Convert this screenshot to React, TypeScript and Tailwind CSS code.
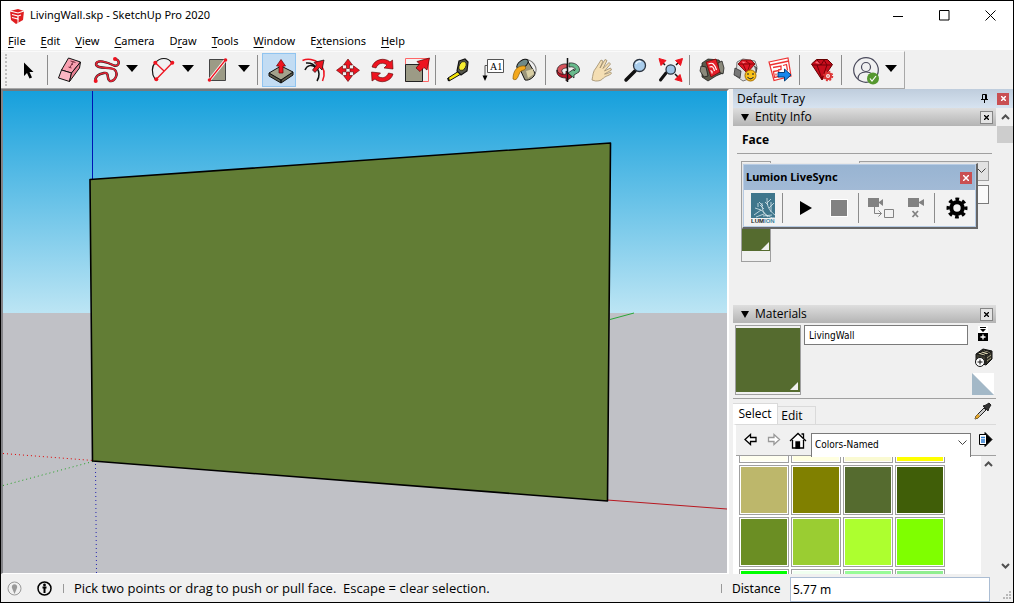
import type { ReactNode } from "react"

const RED = "#ee1420"

const Icon = ({ children }: { children: ReactNode }) => (
  <svg width="34" height="34" viewBox="0 0 34 34" fill="none" stroke="#111" strokeWidth="1">
    {children}
  </svg>
)

const Tool = ({ label, active, children }: { label: string; active?: boolean; children: ReactNode }) => (
  <button
    aria-label={label}
    className={active ? "h-[34px] w-[34px] shrink-0 bg-[#c2dcf3] outline-1 -outline-offset-1 outline-[#90c4f0]" : "h-[34px] w-[34px] shrink-0"}
  >
    <Icon>{children}</Icon>
  </button>
)

const Caret = ({ label }: { label: string }) => (
  <button aria-label={label} className="flex h-[34px] w-[18px] shrink-0 items-center justify-center pr-[2px] pb-1">
    <svg width="12" height="7" viewBox="0 0 12 7"><path d="M0 0h12L6 7z" /></svg>
  </button>
)

const Sep = () => <div className="mr-1 ml-[3px] h-[30px] w-px shrink-0 bg-[#8c8c8c]" />

const Chevron = ({ up }: { up?: boolean }) => (
  <svg width="9" height="6" viewBox="0 0 9 6" fill="none" stroke="#505050" strokeWidth="2">
    <path d={up ? "M1 5l3.500-3.500L8 5" : "M1 1l3.500 3.500L8 1"} />
  </svg>
)

const menus = ["File", "Edit", "View", "Camera", "Draw", "Tools", "Window", "Extensions", "Help"]
const underlined: Record<string, number> = { Draw: 1, Extensions: 1 }

const TitleBar = () => (
  <header className="flex h-[29px] items-center bg-white pl-2">
    <svg width="17" height="16" viewBox="0 0 17 16" fill="none">
      <path d="M1 3l8-2 6 2-1 9-7 4-5-4z" fill="#e01e20" />
      <path d="M1 3l8 2 6-2M3 6.500l6 1.500v3l-6-1.500M9 8l3-1" stroke="#fff" strokeWidth="1.200" />
      <path d="M9 11v4" stroke="#fff" />
    </svg>
    <h1 className="ml-1 flex-1 font-['Noto_Sans',sans-serif] text-[11px]">LivingWall.skp - SketchUp Pro 2020</h1>
    <button aria-label="Minimize" className="flex h-7 w-[46px] items-center justify-center">
      <svg width="10" height="10" stroke="#000"><path d="M0 5.500h10" /></svg>
    </button>
    <button aria-label="Maximize" className="flex h-7 w-[46px] items-center justify-center">
      <svg width="11" height="11" fill="none" stroke="#000"><path d="M.5.5h9.500v9.500H.5z" /></svg>
    </button>
    <button aria-label="Close" className="flex h-7 w-[46px] items-center justify-center">
      <svg width="11" height="11" stroke="#000"><path d="M.5.5l10 10M10.500.5l-10 10" /></svg>
    </button>
  </header>
)

const MenuBar = () => (
  <nav className="flex h-5 items-center gap-px bg-white pt-[2px]">
    {menus.map((menu) => {
      const at = underlined[menu] || 0
      return (
        <button key={menu} className="px-[7px] font-['Noto_Sans',sans-serif] text-[11px] leading-4">
          {menu.slice(0, at)}
          <span className="underline underline-offset-2">{menu[at]}</span>
          {menu.slice(at + 1)}
        </button>
      )
    })}
  </nav>
)

const ToolBar = () => (
  <div className="flex h-[39px] bg-[#f0f0f0] pt-px">
    <div className="flex items-center border-t border-r border-b border-t-[#fafafa] border-r-[#a8a8a8] border-b-[#a8a8a8] bg-[#f1f1f1] pr-[3px] pl-1">
      <div className="mr-[2px] h-8 w-[3px] border-l-2 border-dotted border-[#bdbdbd]" />
      <Tool label="Select">
        <path d="M14 9.500V23l3-3 2.500 5.500 2.500-1-2.500-5.500h4z" fill="#000" stroke="none" />
      </Tool>
      <Sep />
      <Tool label="Eraser">
        <path d="M16.500 5l12 4-9 11-10-3z" fill="#f8a0b0" />
        <path d="M9.500 17l10 3-2 8.500-11-3.500z" fill="#fbb6c2" />
        <path d="M19.500 20l9-11-1 6-10 13.500z" fill="#e87f92" />
        <path d="M18.500 8l5 1.500M16.500 14l3 1M21.500 8.500l-4 6.500M19 11l2 .5" stroke="#7a3040" />
      </Tool>
      <div className="flex pl-1">
        <Tool label="Freehand">
          <path d="M25 5.700C31 8 29 14 24 12.500 17 9 7 6 6 11c0 6 16 2 19 6 4 5-1 12-5 11-4-2 0-9-6-8-6 1-9 3-8.500 8" stroke="#1a1a1a" strokeWidth="2.400" />
          <path d="M25 5.700C31 8 29 14 24 12.500 17 9 7 6 6 11c0 6 16 2 19 6 4 5-1 12-5 11-4-2 0-9-6-8-6 1-9 3-8.500 8" stroke="#e22334" strokeWidth="1.600" />
          <circle cx="25" cy="6" r="2" fill={RED} stroke="none" />
          <circle cx="5.700" cy="28" r="2" fill={RED} stroke="none" />
        </Tool>
        <Caret label="Freehand options" />
      </div>
      <div className="flex pl-1">
        <Tool label="Arc">
          <path d="M9 26C5 20 6 13 9 10c5-6 13-6 17 0" strokeWidth="1.200" />
          <path d="M9.300 9.700l9 8.500M26.300 9.700l-16 16.600" stroke={RED} strokeWidth="1.300" />
          <g fill={RED} stroke="none">
            <circle cx="9.300" cy="9.700" r="2" /><circle cx="26.300" cy="9.700" r="2" /><circle cx="10.300" cy="26.300" r="2" />
          </g>
        </Tool>
        <Caret label="Arc options" />
      </div>
      <div className="flex pl-1">
        <Tool label="Rectangle">
          <path d="M7.500 6.500h16v21h-16z" fill="#9c9b86" stroke="#444" />
          <path d="M7.500 27l16-20" stroke="#fff" strokeWidth="3" />
          <path d="M7.500 27l16-20" stroke={RED} strokeWidth="1.300" />
          <g fill={RED} stroke="none"><circle cx="7.500" cy="27" r="1.800" /><circle cx="23.500" cy="7" r="1.800" /></g>
        </Tool>
        <Caret label="Rectangle options" />
      </div>
      <Sep />
      <Tool label="Push/Pull" active>
        <path d="M7 20l12 7v3L7 23zM31 19l-12 8v3l12-8z" fill="#5f5e4e" />
        <path d="M7 20l12-7 12 6-12 8z" fill="#a3a28c" />
        <path d="M17 20v-7h-2.500l4.500-6.500 4.500 6.500H21v7z" fill={RED} stroke="#600" strokeWidth=".7" />
      </Tool>
      <Tool label="Offset">
        <path d="M6.500 7.500C17 3 33 12 26.500 28" stroke={RED} strokeWidth="1.500" />
        <path d="M9 17c2-5 7-6 11-2M10 10c8-1 17 8 11 18" strokeWidth="1.500" />
        <path d="M16.500 17l4-5-2.500-2.500L28 7l-2 10-2.500-2.500-4.500 5z" fill={RED} strokeWidth=".7" />
      </Tool>
      <Tool label="Move">
        <path d="M18 6l4.500 6h-3v3.500h-3V12h-3zM18 28.500l4.500-6h-3V19h-3v3.500h-3zM6.500 17.300l6-4.500v3H16v3h-3.500v3zM29.500 17.300l-6-4.500v3H20v3h3.500v3z" fill={RED} stroke="#500" strokeWidth=".6" />
      </Tool>
      <Tool label="Rotate">
        <path d="M8 14C10 6 21 4 26 9l2.500-2 .5 9-9-1 3-3c-4-3-9-2-11 3zM29 21c-2 8-13 10-18 5l-3 2-.5-9 9 1-3 3c4 3 9 2 11-3z" fill={RED} stroke="#500" strokeWidth=".6" />
      </Tool>
      <Tool label="Scale">
        <path d="M7.500 5.500h23v23h-23z" stroke="#f66" />
        <path d="M7.500 11.500h17v17h-17z" fill="#9c9b86" stroke="#222" />
        <path d="M18 15l3.500-4L19 8.500 31.500 5 29 17l-3-2.500-4 4z" fill={RED} stroke="#500" strokeWidth=".7" />
      </Tool>
      <Sep />
      <Tool label="Tape Measure">
        <path d="M19 18L8 25l1 3 12-7z" fill="#f5e60a" />
        <path d="M19 8l6-2 3 3-1 9-6 4-4-4z" fill="#55564c" strokeWidth="1.200" />
        <ellipse cx="22.500" cy="13" rx="3.200" ry="4.700" transform="rotate(25 22.500 13)" fill="#f7ee30" strokeWidth=".7" />
        <path d="M8 25l1 3" strokeWidth="2" />
      </Tool>
      <Tool label="Text">
        <path d="M13.500 6.500h16v13h-16z" fill="#fff" stroke="#555" />
        <path d="M13 12.500h-2V24" stroke="#555" />
        <path d="M8.500 22.500h5L11 28z" fill="#000" stroke="none" />
        <text x="16" y="16.500" fontSize="10" fontFamily="Liberation Serif, serif" fill="#000" stroke="none">A1</text>
      </Tool>
      <Tool label="Paint Bucket">
        <ellipse cx="22" cy="14" rx="5" ry="8" transform="rotate(-35 22 14)" stroke="#777" />
        <path d="M10 12l9-5 8 13c0 4-6 8-10 7z" fill="#9b957a" />
        <path d="M18 18l7-2 1 5-6 4z" fill="#d9cfa4" stroke="none" />
        <ellipse cx="14.500" cy="11" rx="6.500" ry="3.500" transform="rotate(-35 14.500 11)" fill="#6f8a88" />
        <path d="M17 13c-8-1-12 5-12 13 5 3 5-5 8-8 2-1 6-1 4-5z" fill="#f3a81d" stroke="#8a5a00" strokeWidth=".7" />
      </Tool>
      <Sep />
      <Tool label="Orbit">
        <path d="M17 11C9 10 5 16 8 21l5 2v-3c-3-3 0-5 4-5z" fill="#d4545c" strokeWidth=".7" />
        <path d="M19 10c8-1 12 5 10 9l-5 3v3l-6-5 6-4v2c3-2 0-5-5-4z" fill="#69bb8d" strokeWidth=".7" />
        <path d="M7 17c1 4 6 5 9 4v-3l6 6-6 4v-3c-6 0-10-3-9-8z" fill="#b81729" strokeWidth=".7" />
        <path d="M17.500 5v24" strokeWidth="1.500" />
      </Tool>
      <Tool label="Pan">
        <path d="M8 27c1-5 1-9 4-12l5-8 2 1-3 7 5-8.500 2 1-4 8 6-6 1.500 1.500-6 7 6-3 1 2-7 4c4 0 6-3 7-1 0 2-7 3-9 6-2 2-5 2-7 2z" fill="#f4deb3" stroke="#9c8a6a" strokeWidth=".8" />
      </Tool>
      <Tool label="Zoom">
        <path d="M17 18l-9 9" strokeWidth="3.500" strokeLinecap="round" />
        <circle cx="21.500" cy="12.500" r="6" fill="#a9cdec" stroke="#2b3440" strokeWidth="1.300" />
        <path d="M18 11c1-3 4-3 5-2" stroke="#e8f4ff" strokeWidth="1.500" />
      </Tool>
      <Tool label="Zoom Extents">
        <path d="M14 20l-5.500 7" strokeWidth="3" strokeLinecap="round" />
        <path d="M13 12l-4-4M24 12l4-4M23 21l4 4" strokeWidth="1.500" />
        <path d="M7 5.500l7 2-5 5zM30.500 5.500l-7 2 5 5zM30 28.500l-2-7-5 5z" fill={RED} stroke={RED} />
        <circle cx="18.700" cy="16.500" r="4.700" fill="#9fc5e5" stroke="#2b3440" strokeWidth="1.300" />
      </Tool>
      <Sep />
      <Tool label="3D Warehouse">
        <path d="M8 10l6-4 11 1 3 5 1 8-7 3-8 5-6-4z" fill="#5c5b4c" strokeWidth=".7" />
        <path d="M7 13l5 1 2 9-4 1-4-6zM24 10l4-2 2 7-1 6-4-2z" fill="#8b8a7c" strokeWidth=".7" />
        <path d="M12 9l10-3 4 13-9 5z" fill="#e4202a" stroke="#700" strokeWidth=".7" />
        <path d="M14.500 11c4-2 6 0 8 6M15.500 14c3-1 4 0 5 4M16.500 17.500l1.500 1v2" stroke="#fff" strokeWidth="1.200" />
      </Tool>
      <Tool label="Extension Warehouse">
        <path d="M9 9l6-3 12 2 2 6-3 10-11 4-7-5z" fill="#dedede" stroke="#777" />
        <path d="M7 15l6 3-1 7-6-3zM26 13l3 2-1 5" fill="#777" stroke="#333" strokeWidth=".8" />
        <path d="M10 11l4-4h9l4 4-8 9z" fill="#df1826" stroke="#700" strokeWidth=".8" />
        <path d="M10 11h17M15 11l4 9M18 8l4 3-3 9" stroke="#700" strokeWidth=".8" />
        <path d="M14 8.500l4 .5-3 1.500z" fill="#ff8088" stroke="none" />
        <circle cx="22.500" cy="22.500" r="5.500" fill="#f9c21a" stroke="#a56a00" />
        <path d="M20 20v2M25 20v2M19.500 24c2 2.500 4 2.500 6 0" stroke="#333" strokeWidth="1.200" />
      </Tool>
      <Tool label="Send to LayOut">
        <path d="M7 9l19-4 3 18-17 4.500z" fill="#fff" stroke="#e33" strokeWidth="1.200" />
        <path d="M8 12l19-4M11 14.500l8-1.500v3.500l-3 .5M11.500 18.500l5-1 1 6-5 1zM21 12.500l3.500-1 1 6M14 20.500v2" stroke="#e33" strokeWidth="1.300" />
        <path d="M16 19.500h6.500V16l6.500 6-6.500 6v-4H16z" fill="#1687ec" stroke="#053e78" />
      </Tool>
      <Sep />
      <Tool label="Extension Manager">
        <path d="M7.500 11l5-4.500h11l5 5L18 27z" fill="#c60d1c" stroke="#600" />
        <path d="M8 12h20M13 12l5 14 5-14M13 7l4 5 3-5 3 5" stroke="#730008" />
        <path d="M13 8l3 3-5-1z" fill="#ff6b76" stroke="none" />
        <circle cx="24" cy="23" r="3" fill="#f1f1f1" stroke="#d33" strokeWidth="2" />
        <circle cx="24" cy="23" r="4.500" stroke="#d33" strokeWidth="1.500" strokeDasharray="2 1.500" />
        <circle cx="24" cy="23" r=".8" fill="#d33" stroke="none" />
      </Tool>
      <Sep />
      <div className="flex pl-[3px]">
        <Tool label="Account">
          <g stroke="#4a4a5c" strokeWidth="1.200">
            <circle cx="17" cy="17" r="12.300" /><circle cx="17" cy="14" r="4.500" />
            <path d="M9 26c0-5 3-7 8-7s8 2 8 7" />
          </g>
          <circle cx="24" cy="25.500" r="6" fill="#56982f" stroke="none" />
          <path d="M21 25.500l2 2.500 4-5" stroke="#fff" strokeWidth="1.200" />
        </Tool>
        <Caret label="Account options" />
      </div>
    </div>
  </div>
)

const Scene = () => (
  <main className="min-h-0 min-w-0 flex-1 overflow-hidden border-t-2 border-r-2 border-b border-l-2 border-t-[#75797c] border-r-white border-b-white border-l-[#848488] bg-[#c0c1c6]">
    <svg className="h-full w-full" viewBox="0 0 724 482" preserveAspectRatio="xMinYMin slice" fill="none">
      <defs>
        <linearGradient id="sky" x1="0" y1="0" x2="0" y2="1">
          <stop offset="0" stopColor="#16a0dc" />
          <stop offset="1" stopColor="#bce5f4" />
        </linearGradient>
      </defs>
      <rect width="724" height="222" fill="url(#sky)" />
      <rect y="222" width="724" height="264" fill="#c0c1c6" />
      <path d="M89.500 0v90" stroke="#0014b4" />
      <path d="M0 362.500l90 7" stroke="#e00000" strokeDasharray="1 3" />
      <path d="M0 394.500l90-24" stroke="#20a020" strokeDasharray="1 3" />
      <path d="M92.500 373l1 110" stroke="#2020b0" strokeDasharray="1 3" />
      <path d="M607 228.500l24-6.500" stroke="#28a838" />
      <path d="M604 409l120 9" stroke="#b81820" />
      <path d="M87 88.500L607.500 52l-3 358L89.500 370z" fill="#627d35" stroke="#000" strokeWidth="1.600" strokeLinejoin="round" />
    </svg>
  </main>
)

const SectionHeader = ({ title }: { title: string }) => (
  <div className="flex h-[18px] shrink-0 items-center bg-linear-to-b from-[#dedede] to-[#b4b4b4] pr-[3px] pl-2">
    <svg width="8" height="8" viewBox="0 0 8 8"><path d="M0 1h8L4 8z" /></svg>
    <h2 className="ml-[6px] flex-1 text-[12px] leading-4">{title}</h2>
    <button aria-label={`Close ${title}`} className="flex h-[13px] w-[13px] items-center justify-center border border-[#858585] bg-[#e4e4e4]">
      <svg width="5" height="5" stroke="#000" strokeWidth="1.300"><path d="M0 0l5 5M5 0L0 5" /></svg>
    </button>
  </div>
)

const Corner = () => (
  <svg width="8" height="8"><path d="M8 0v8H0z" fill="#f0f0f0" /></svg>
)

const EntityInfo = () => (
  <section className="h-[197px] shrink-0">
    <SectionHeader title="Entity Info" />
    <div className="mx-1 flex h-7 items-center border-b border-[#a0a0a0] pl-[5px] text-[12px] font-bold">Face</div>
    <div className="flex justify-between pt-[7px] pr-[7px] pl-2">
      <button aria-label="Material swatch" className="flex h-[101px] w-[30px] flex-col border border-[#a0a0a0] py-[10px]">
        <span className="flex h-full w-full items-end justify-end bg-[#556b2f] p-px"><Corner /></span>
      </button>
      <div className="flex w-[130px] flex-col gap-1">
        <button aria-label="Tag" className="flex h-5 items-center justify-end border border-[#a0a0a0] bg-[#e2e2e2] pr-[2px]">
          <svg width="9" height="6" fill="none" stroke="#444"><path d="M.5.5l4 4 4-4" /></svg>
        </button>
        <input aria-label="Area" className="h-[19px] border border-[#7a7a7a] bg-[#fafafa]" />
      </div>
    </div>
  </section>
)

const LiveSync = () => (
  <aside className="absolute top-[74px] left-[9px] w-[236px] border-t border-r-2 border-b-2 border-l border-t-[#e8e8e8] border-r-[#666] border-b-[#666] border-l-[#e8e8e8] bg-[#b8cce4] p-px">
    <div className="flex h-[25px] items-center bg-linear-to-b from-[#98b4d2] to-[#a2bad6] pr-[3px] pl-[2px]">
      <h2 className="flex-1 font-['Noto_Sans',sans-serif] text-[11px] font-bold">Lumion LiveSync</h2>
      <button aria-label="Close Lumion LiveSync" className="flex h-3 w-3 items-center justify-center bg-[#c94f52]">
        <svg width="6" height="6" stroke="#fff" strokeWidth="1.500"><path d="M0 0l6 6M6 0L0 6" /></svg>
      </button>
    </div>
    <div className="flex h-[36px] items-center bg-[#f2f2f2] pl-[7px]">
      <button aria-label="Lumion">
        <svg width="25" height="31" viewBox="0 0 25 31" fill="none">
          <path d="M0 0h24v25H0z" fill="#3f768c" />
          <path d="M24 25c-7 0-10-5-14-8l-6-2M17 24c-6-4-6-10-6-14M24 22C17 17 16 12 16 5M18 15l5-5M10 17l-7 5M13 21l-8 3M12 13L8 9M20 19V9M7 14v-4M16 10l4-4M13 16l-4-4M21 22l-9 1M17 12l-3-3" stroke="#d9e8ed" strokeWidth=".8" />
          <text x="0" y="30" fontSize="6" fontFamily="Liberation Sans, sans-serif" fontWeight="700" fill="#222">LUM<tspan fill="#3f85a0">ION</tspan></text>
        </svg>
      </button>
      <div className="ml-[6px] h-[30px] w-px bg-[#8c8c8c]" />
      <button aria-label="Start LiveSync" className="ml-4">
        <svg width="14" height="16"><path d="M1 1v14l12-7z" /></svg>
      </button>
      <button aria-label="Stop LiveSync" className="ml-[18px] h-4 w-4 bg-[#828282] outline-1 outline-white" />
      <div className="ml-[11px] h-[30px] w-px bg-[#8c8c8c]" />
      <button aria-label="Sync camera" className="ml-[9px]">
        <svg width="27" height="22" viewBox="0 0 27 22" fill="none" stroke="#828282">
          <path d="M0 1h11v9H0zM11 5l4-3v7l-4-3z" fill="#828282" stroke="none" />
          <path d="M6.500 10v6.500h7M10.500 13.500l3 3-3 3M16.500 12.500h9v8h-9z" />
        </svg>
      </button>
      <button aria-label="Disable camera" className="ml-[13px]">
        <svg width="17" height="22" viewBox="0 0 17 22" fill="none">
          <path d="M0 1h11v9H0zM11 5l5-3v7l-5-3z" fill="#828282" />
          <path d="M4.500 14l5.500 6M10 14l-5.500 6" stroke="#828282" strokeWidth="1.800" />
        </svg>
      </button>
      <div className="ml-[9px] h-[30px] w-px bg-[#8c8c8c]" />
      <button aria-label="Settings" className="ml-[11px]">
        <svg width="22" height="22" viewBox="0 0 22 22" fill="none" stroke="#000">
          <circle cx="11" cy="11" r="5.700" strokeWidth="4" />
          <circle cx="11" cy="11" r="8.800" strokeWidth="3.400" strokeDasharray="3.700 3.211" strokeDashoffset="1.850" />
        </svg>
      </button>
    </div>
  </aside>
)

const swatches = [
  "#fffff0", "#ffffe0", "#fafad2", "#ffff00",
  "#bdb76b", "#808000", "#556b2f", "#405e08",
  "#6b8e23", "#9acd32", "#adff2f", "#7fff00",
  "#00ff00", "#f0fff0", "#98fb98", "#90ee90",
]

const Materials = () => (
  <section className="flex min-h-0 flex-1 flex-col">
    <SectionHeader title="Materials" />
    <div className="flex h-[76px] shrink-0 border-b border-[#a0a0a0] pt-[2px] pl-[2px]">
      <button aria-label="Current material" className="h-[70px] w-[66px] border border-[#a0a0a0] py-[2px]">
        <span className="flex h-full w-full items-end justify-end bg-[#556b2f] p-[2px]"><Corner /></span>
      </button>
      <input aria-label="Material name" defaultValue="LivingWall" className="ml-[3px] h-5 min-w-0 flex-1 border border-[#7a7a7a] bg-white px-1 font-['DejaVu_Sans_Condensed',sans-serif] text-[10px]" />
      <div className="mr-[2px] ml-1 flex w-[22px] flex-col items-center">
        <button aria-label="Display secondary pane" className="shrink-0">
          <svg width="12" height="17" viewBox="0 0 12 17">
            <path d="M1 1h10v7H1z" fill="#fff" /><path d="M3 2h6v1H3zM3 4h6L6 7zM1 8h10v8H1z" />
            <path d="M6 9.500v5M3.500 12h5" stroke="#fff" strokeWidth="1.300" />
          </svg>
        </button>
        <button aria-label="Create material" className="mt-[6px] shrink-0">
          <svg width="19" height="20" viewBox="0 0 19 20" stroke="#111" fill="none">
            <path d="M2 6l7-5 9 2v8l-6 6-10-3z" fill="#3c3b30" />
            <path d="M3 6l7-4 7 2-6 4z" fill="#d9d2ad" /><path d="M5 4l8 3M8 3l7 2M12 8v8M15 6v8" />
            <path d="M13 10l4-3M13 13l4-3" stroke="#a9a484" />
            <circle cx="6" cy="14" r="4.500" fill="#fff" /><path d="M6 11.500v5M3.500 14h5" />
          </svg>
        </button>
        <button aria-label="Default material" className="mt-[5px] shrink-0">
          <svg width="22" height="22"><path d="M0 0h22v22z" fill="#fff" /><path d="M0 0v22h22z" fill="#a3b8c7" /></svg>
        </button>
      </div>
    </div>
    <div className="flex h-[25px] shrink-0 items-end text-[12px]" role="tablist">
      <button role="tab" aria-selected="true" className="h-[21px] w-[45px] border-t border-r border-[#dadada] bg-white pb-px">Select</button>
      <button role="tab" aria-selected="false" className="h-[18px] w-[38px] border-t border-r border-[#dadada] pr-[9px]">Edit</button>
      <button aria-label="Sample paint" className="mr-1 ml-auto self-start pt-[3px]">
        <svg width="18" height="18" viewBox="0 0 18 18" fill="none" stroke="#222">
          <path d="M10 6l2 2-8 8-3 1 1-3z" fill="#c8c8c8" />
          <path d="M1 17l3-1 2-2-2-2-2 2z" fill="#e5a72c" stroke="none" />
          <path d="M9 4l5 5 1-3 2-3-2-2-3 2z" fill="#333" />
        </svg>
      </button>
    </div>
    <div className="flex min-h-0 flex-1 flex-col border-t border-l-[3px] border-t-[#dadada] border-l-white">
      <div className="flex h-[31px] shrink-0 items-center border-b border-[#a0a0a0] pl-2">
        <button aria-label="Back">
          <svg width="14" height="14" viewBox="0 0 14 14" fill="#fff" stroke="#000" strokeWidth="1.300"><path d="M1 6.500L6.500 1.500v3H12v4H6.500v3z" /></svg>
        </button>
        <button aria-label="Forward" className="ml-[9px]">
          <svg width="14" height="14" viewBox="0 0 14 14" fill="#fff" stroke="#999" strokeWidth="1.300"><path d="M12.500 6.500L7 1.500v3H1.500v4H7v3z" /></svg>
        </button>
        <button aria-label="In model" className="ml-[8px]">
          <svg width="18" height="17" viewBox="0 0 18 17" fill="#fff" stroke="#000" strokeWidth="1.300">
            <path d="M3.500 8v8h11V8M1 9l8-7.500L17 9" /><path d="M12.500 2h2v4" /><path d="M7 10h3.500v6H7z" fill="#000" />
          </svg>
        </button>
        <div className="relative ml-1 mt-[6px] min-w-0 flex-1">
          <select aria-label="Collection" className="h-6 w-full appearance-none border border-b-0 border-[#7a7a7a] bg-white pb-[2px] pl-[3px] font-['DejaVu_Sans_Condensed',sans-serif] text-[10px]">
            <option>Colors-Named</option>
          </select>
          <svg className="pointer-events-none absolute top-[10px] right-1" width="9" height="6" fill="none" stroke="#444"><path d="M.5.5l4 4 4-4" /></svg>
        </div>
        <button aria-label="Details" className="mr-[3px] ml-2 pb-[2px]">
          <svg width="14" height="15" viewBox="0 0 14 15" fill="none" stroke="#000">
            <path d="M6 .5l7 7-7 7z" fill="#000" /><path d="M.5 2.500h7v10h-7z" fill="#fff" /><path d="M2 5.500h4M2 8h4M2 10h4" stroke="#2b7bd0" strokeWidth="1.500" />
          </svg>
        </button>
      </div>
      <div className="flex min-h-0 flex-1 overflow-hidden bg-white">
        <div className="flex-1 pl-[3px]">
          <div className="-mt-[43px] grid w-fit grid-cols-4 gap-[2px]">
            {swatches.map((color) => (
              <button key={color} aria-label={color} className="h-[50px] w-[50px] border border-[#a0a0a0] p-px">
                <span className="block h-full w-full" style={{ background: color }} />
              </button>
            ))}
          </div>
        </div>
        <div className="flex w-[15px] justify-center bg-[#f0f0f0]">
          <button aria-label="Scroll materials up" className="h-4"><Chevron up /></button>
        </div>
      </div>
    </div>
  </section>
)

const Tray = () => (
  <div className="relative ml-1 flex w-[280px] shrink-0 flex-col bg-[#f0f0f0]">
    <div className="flex h-[19px] shrink-0 items-center bg-linear-to-b from-[#bfcddd] to-[#d7e3f0] pr-1 pl-1">
      <h2 className="flex-1 text-[12px]">Default Tray</h2>
      <button aria-label="Pin tray">
        <svg width="7" height="9" viewBox="0 0 7 9" stroke="#000" fill="none"><path d="M1.500 5V.5h4V5M0 5.500h7M3.500 6v3M4.500 1v4" /></svg>
      </button>
      <button aria-label="Close tray" className="ml-[9px] flex h-3 w-3 items-center justify-center bg-[#c94f52]">
        <svg width="5" height="5" stroke="#fff" strokeWidth="1.500"><path d="M0 0l5 5M5 0L0 5" /></svg>
      </button>
    </div>
    <div className="flex min-h-0 flex-1">
      <div className="flex min-h-0 min-w-0 flex-1 flex-col">
        <EntityInfo />
        <Materials />
      </div>
      <div className="ml-px flex w-4 flex-col items-center bg-[#f0f0f0]">
        <button aria-label="Scroll tray up" className="h-[18px]"><Chevron up /></button>
        <div className="h-[17px] w-full bg-[#cdcdcd]" />
        <button aria-label="Scroll tray down" className="mt-auto h-4"><Chevron /></button>
      </div>
    </div>
    <LiveSync />
  </div>
)

const StatusBar = () => (
  <footer className="flex h-7 shrink-0 items-center bg-[#f0f0f0] pl-[6px] text-[12px]">
    <button aria-label="Geo-location">
      <svg width="15" height="15" viewBox="0 0 15 15" fill="none" stroke="#999"><circle cx="7.500" cy="7.500" r="6.500" /><path d="M7.500 13L5 7a2.700 2.700 0 1 1 5 0z" fill="#999" stroke="none" /></svg>
    </button>
    <button aria-label="Credits" className="ml-[15px]">
      <svg width="15" height="15" viewBox="0 0 15 15" fill="none" stroke="#000"><circle cx="7.500" cy="7.500" r="6.500" strokeWidth="1.500" /><circle cx="7.500" cy="4" r="1.400" fill="#000" stroke="none" /><path d="M5.500 6.500h4M7.500 6v6" strokeWidth="2" /></svg>
    </button>
    <div className="mr-[10px] ml-[11px] h-[9px] w-px bg-[#999]" />
    <p className="flex-1 pt-[2px] text-[13px] whitespace-pre">Pick two points or drag to push or pull face.  Escape = clear selection.</p>
    <div className="mr-[10px] h-[9px] w-px bg-[#999]" />
    <label htmlFor="distance" className="w-[58px] pt-[2px] font-['Noto_Sans',sans-serif]">Distance</label>
    <input id="distance" defaultValue="5.77 m" className="mt-[2px] h-[25px] w-[200px] border border-[#abbdd3] bg-white px-[2px] font-['Noto_Sans',sans-serif]" />
    <svg className="ml-[12px] self-end" width="11" height="11" fill="#b8b8b8"><path d="M7 0h2v2H7zM4 3h2v2H4zM7 3h2v2H7zM1 6h2v2H1zM4 6h2v2H4zM7 6h2v2H7z" /></svg>
  </footer>
)

export default function App() {
  return (
    <div className="flex h-screen flex-col overflow-hidden border border-black bg-[#f0f0f0] font-['Open_Sans',sans-serif] text-black">
      <TitleBar />
      <MenuBar />
      <ToolBar />
      <div className="flex min-h-0 flex-1">
        <Scene />
        <Tray />
      </div>
      <StatusBar />
    </div>
  )
}
